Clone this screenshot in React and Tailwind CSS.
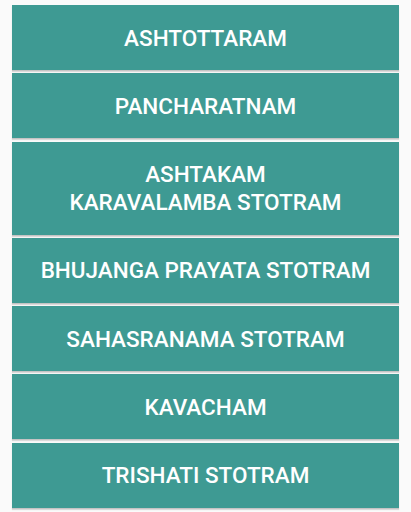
const STOTRAS = [
  "ASHTOTTARAM",
  "PANCHARATNAM",
  "ASHTAKAM\nKARAVALAMBA STOTRAM",
  "BHUJANGA PRAYATA STOTRAM",
  "SAHASRANAMA STOTRAM",
  "KAVACHAM",
  "TRISHATI STOTRAM",
];

const App = () => {
  return (
    <div className="min-h-screen bg-[#fafafa] px-[12px] pt-[5px] pb-[4px]">
      <div className="flex flex-col gap-[3.3px]">
        {STOTRAS.map((title) => (
          <button
            key={title}
            className="w-full min-h-[65px] px-4 py-[18.5px] bg-[#3e9a93] text-white text-[22.5px] leading-[28px] font-medium text-center whitespace-pre-line shadow-[0_1px_0_#c4c4c4,0_2px_1px_#dadada]"
            style={{ fontFamily: "Roboto, 'Noto Sans', sans-serif" }}
          >
            {title}
          </button>
        ))}
      </div>
    </div>
  );
};

export default App;
